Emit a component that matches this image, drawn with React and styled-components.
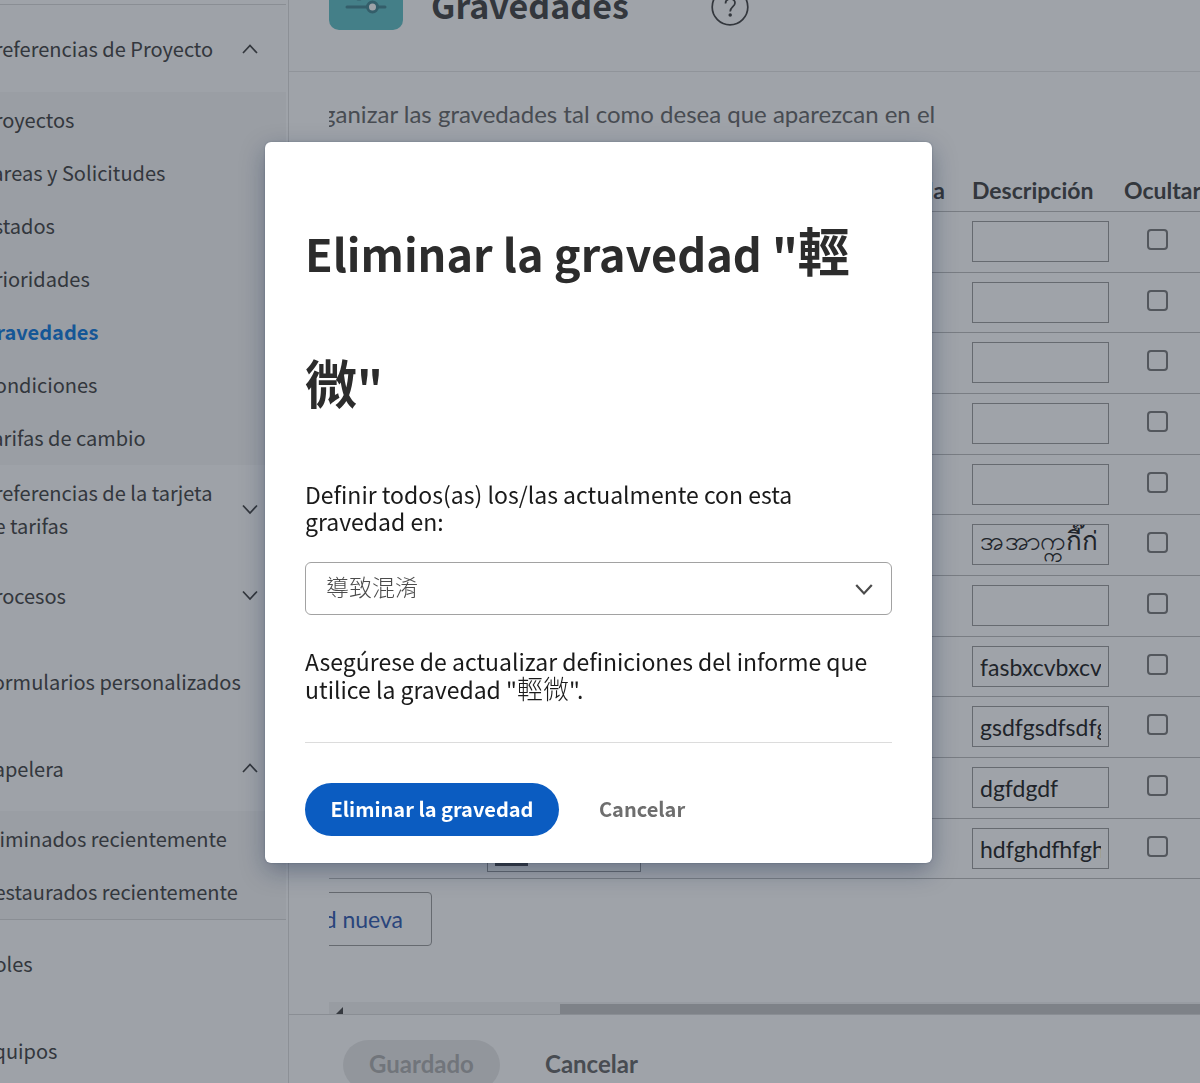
import React from "react";
import styled, { createGlobalStyle } from "styled-components";

const clean = `"Noto Sans CJK TC", "Noto Sans", sans-serif`;
const nova = `Lato, "Noto Sans", "Noto Sans CJK TC", sans-serif`;

const GlobalStyle = createGlobalStyle`
  *, *::before, *::after { box-sizing: border-box; }
  body { margin: 0; background: #fff; font-family: ${nova}; color: #4b4b4b; }
  button, input, select { font: inherit; color: inherit; margin: 0; }
`;

const Page = styled.div`
  display: flex;
  height: 100vh;
  overflow: hidden;
`;

/* Sidebar */
const Sidebar = styled.nav`
  flex: 0 0 289px;
  overflow: hidden;
  padding: 4px 2px 0 0;
  border-right: 1px solid #e0e0e0;
  font-family: ${clean};
  font-size: 20px;
  line-height: 33px;
  color: #4b4b4b;
`;

const GroupButton = styled.button`
  display: flex;
  align-items: center;
  width: 100%;
  height: 87px;
  padding: 0;
  border: 0;
  background: #fdfdfd;
  text-align: left;
  line-height: 33px;
`;

const Group = styled.div`
  border-top: ${(p) => (p.$ruled ? "1px solid #dcdcdc" : "0")};
  &:nth-child(2n + 3) > ${GroupButton} { height: 86px; }
`;

const GroupLabel = styled.span`
  flex: 1;
  margin-left: -18px;
  white-space: pre;
`;

const ArrowBox = styled.span`
  display: flex;
  align-items: center;
  justify-content: center;
  align-self: stretch;
  width: 60px;
  margin-left: -24px;
  padding-right: 12px;
`;

const SubList = styled.ul`
  list-style: none;
  margin: 0;
  padding: 1px 0;
  background: #f7f7f7;
`;

const SubLink = styled.a`
  display: block;
  height: 53px;
  margin-left: -18px;
  line-height: 53px;
  white-space: nowrap;
  text-decoration: none;
  color: ${(p) => (p.$active ? "#1a80e0" : "inherit")};
  font-weight: ${(p) => (p.$active ? 700 : 400)};
`;

/* Main column */
const Main = styled.main`
  flex: 1;
  min-width: 0;
  display: flex;
  flex-direction: column;
`;

const Header = styled.header`
  display: flex;
  align-items: flex-end;
  flex: 0 0 72px;
  padding: 0 40px 41px;
  overflow: hidden;
  border-bottom: 1px solid #e6e6e6;
`;

const Title = styled.h1`
  margin: 0 82px 0 28px;
  padding-bottom: 2px;
  font-family: ${clean};
  font-size: 34px;
  line-height: 46px;
  font-weight: 700;
`;

const HelpButton = styled.button`
  display: flex;
  align-items: center;
  height: 46px;
  padding: 0;
  border: 0;
  background: none;
`;

const Body = styled.section`
  flex: 1;
  min-height: 0;
  margin-left: 40px;
  display: flex;
  flex-direction: column;
  overflow: hidden;
`;

const Intro = styled.p`
  margin: 26px 0 0 -28px;
  font-size: 24px;
  line-height: 32px;
  color: #6e6e6e;
  white-space: nowrap;
`;

const Table = styled.table`
  width: 915px;
  margin-top: 40px;
  table-layout: fixed;
  border-collapse: separate;
  border-spacing: 0;
  font-size: 23px;
`;

const HeadCell = styled.th`
  height: 42px;
  padding: 0 ${(p) => (p.$end ? 27 : 0)}px 0 0;
  border-bottom: 1px solid #c0c0c0;
  text-align: ${(p) => (p.$end ? "right" : "left")};
  line-height: 39px;
  font-weight: 700;
`;

const BodyRow = styled.tr`
  height: 61px;
  &:nth-child(3n + 2) { height: 60px; }
`;

const Cell = styled.td`
  padding: ${(p) => p.$top || 9}px 0 0 ${(p) => p.$left || 0}px;
  border-bottom: 1px solid #c0c0c0;
  vertical-align: top;
`;

const DescriptionInput = styled.input`
  display: block;
  width: 137px;
  height: 41px;
  padding: 0 7px ${(p) => (p.$stacked ? 6 : 0)}px;
  border: 1px solid #a0a0a0;
  border-radius: 0;
  background: #fff;
  color: #2c2c2c;
  font-size: ${(p) => (p.$stacked ? 26 : 23)}px;
`;

const Tick = styled.input`
  appearance: none;
  display: block;
  width: 21px;
  height: 21px;
  border: 2px solid #808080;
  border-radius: 4px;
  background: #fff;
`;

const ColorInput = styled.span`
  display: block;
  width: 154px;
  height: 47px;
  padding: 7px;
  border: 1px solid #a0a0a0;
`;

const Swatch = styled.span`
  display: block;
  width: 33px;
  height: 33px;
  background: #555;
`;

const AddButton = styled.button`
  flex: none;
  width: 334px;
  height: 54px;
  margin: 13px 0 0 -231px;
  padding: 0 28px;
  border: 1px solid #a0a0a0;
  border-radius: 4px;
  background: #fff;
  color: #3b63b5;
  font-size: 23px;
  text-align: right;
  white-space: nowrap;
`;

const ScrollTrack = styled.div`
  display: flex;
  align-items: flex-end;
  justify-content: space-between;
  flex: 0 0 12px;
  margin-top: auto;
  padding-left: 7px;
  background: #f3f3f3;
`;

const ScrollThumb = styled.div`
  width: calc(100% - 224px);
  height: 10px;
  background: #c8c8c8;
`;

const Footer = styled.footer`
  display: flex;
  align-items: flex-start;
  gap: 45px;
  flex: 0 0 69px;
  padding: 25px 54px 0;
  overflow: hidden;
  border-top: 1px solid #dcdcdc;
`;

const FooterButton = styled.button`
  flex: none;
  width: ${(p) => (p.$pill ? "157px" : "auto")};
  height: 50px;
  padding: 0 0 3px;
  border: 0;
  border-radius: 25px;
  background: ${(p) => (p.$pill ? "#eaeaea" : "none")};
  color: ${(p) => (p.$pill ? "#b3b3b3" : "#6e6e6e")};
  font-size: 24px;
  font-weight: 700;
`;

/* Dialog */
const Overlay = styled.div`
  position: fixed;
  inset: 0;
  display: flex;
  align-items: flex-start;
  padding: 142px 268px 24px 265px;
  background: rgba(16, 24, 40, 0.4);
`;

const Dialog = styled.div`
  flex: 1;
  min-width: 0;
  padding: 45px 40px 27px;
  border-radius: 6px;
  background: #fff;
  box-shadow: 0 8px 24px rgba(9, 30, 66, 0.35), 0 0 2px rgba(9, 30, 66, 0.3);
  font-family: ${clean};
  font-size: 23px;
  line-height: 27px;
  color: #1a1a1a;
`;

const DialogTitle = styled.h2`
  margin: 0 0 30px;
  font-size: 45px;
  line-height: 132px;
  font-weight: 700;
  color: #2c2c2c;
`;

const Han = styled.span`
  font-size: ${(p) => (p.$large ? 52 : 26)}px;
  font-weight: ${(p) => (p.$large ? 700 : 300)};
  line-height: 1;
`;

const DialogLabel = styled.label`
  display: block;
`;

const DialogNote = styled.p`
  margin: 0;
`;

const SelectBox = styled.div`
  display: grid;
  align-items: center;
  margin: 27px 0 33px;
  & > * { grid-area: 1 / 1; }
  & > svg { justify-self: end; margin-right: 18px; pointer-events: none; }
`;

const Select = styled.select`
  appearance: none;
  width: 100%;
  height: 53px;
  padding: 0 20px 4px;
  border: 1px solid #a2a2a2;
  border-radius: 6px;
  background: #fff;
  font-weight: 300;
  color: #4b4b4b;
`;

const Actions = styled.div`
  display: flex;
  gap: 40px;
  margin-top: 39px;
  padding-top: 40px;
  border-top: 1px solid #dcdcdc;
`;

const ActionButton = styled.button`
  width: ${(p) => (p.$primary ? "254px" : "auto")};
  height: 53px;
  padding: 0 0 3px;
  border: 0;
  border-radius: 27px;
  background: ${(p) => (p.$primary ? "#0b5cc1" : "none")};
  color: ${(p) => (p.$primary ? "#fff" : "#6e6e6e")};
  font-size: 20px;
  font-weight: 700;
`;

const Chevron = ({ up, size = 18, stroke = 1.7 }) => (
  <svg width={size} height={size} viewBox="0 0 18 18" fill="none" stroke="#4b4b4b" strokeWidth={stroke} aria-hidden="true">
    <path d={up ? "M2 13 9 5.500 16 13" : "M2 5.500 9 13 16 5.500"} />
  </svg>
);

const groups = [
  {
    label: "Preferencias de Proyecto",
    arrow: "up",
    ruled: true,
    items: ["Proyectos", "Tareas y Solicitudes", "Estados", "Prioridades", "Gravedades", "Condiciones", "Tarifas de cambio"],
  },
  { label: "Preferencias de la tarjeta\nde tarifas", arrow: "down" },
  { label: "Procesos", arrow: "down" },
  { label: "Formularios personalizados" },
  { label: "Papelera", arrow: "up", items: ["Eliminados recientemente", "Restaurados recientemente"] },
  { label: "Roles", ruled: true },
  { label: "Equipos" },
];

const descriptions = [
  { text: "" },
  { text: "" },
  { text: "" },
  { text: "" },
  { text: "" },
  { text: "အအာက္ကกี๊ก่", stacked: true },
  { text: "" },
  { text: "fasbxcvbxcvb" },
  { text: "gsdfgsdfsdfg" },
  { text: "dgfdgdf" },
  { text: "hdfghdfhfgh" },
];

export default function App() {
  return (
    <>
      <GlobalStyle />
      <Page>
        <Sidebar>
          {groups.map((g) => (
            <Group key={g.label} $ruled={g.ruled}>
              <GroupButton type="button">
                <GroupLabel>{g.label}</GroupLabel>
                {g.arrow && (
                  <ArrowBox>
                    <Chevron up={g.arrow === "up"} />
                  </ArrowBox>
                )}
              </GroupButton>
              {g.items && (
                <SubList>
                  {g.items.map((item) => (
                    <li key={item}>
                      <SubLink href="#" $active={item === "Gravedades"}>{item}</SubLink>
                    </li>
                  ))}
                </SubList>
              )}
            </Group>
          ))}
        </Sidebar>
        <Main>
          <Header>
            <svg width="74" height="74" viewBox="0 0 74 74" aria-hidden="true">
              <rect width="74" height="74" rx="10" fill="#68c3c8" />
              <g stroke="#4d8c96" strokeWidth="3" strokeLinecap="round">
                <path d="M18 30h38M18 51h38" />
              </g>
              <circle cx="30" cy="38" r="5" fill="#fff" stroke="#4d8c96" strokeWidth="3" />
              <circle cx="43.500" cy="51" r="5" fill="#fff" stroke="#4d8c96" strokeWidth="3" />
            </svg>
            <Title>Gravedades</Title>
            <HelpButton type="button" aria-label="Ayuda">
              <svg width="38" height="38" viewBox="0 0 38 38" fill="none" stroke="#4b4b4b" strokeWidth="1.700">
                <circle cx="19" cy="19" r="17.800" />
                <path d="M14.500 15.500c0-6 9.500-6 9.500-.5 0 3.500-4.800 4-4.800 8.500" />
                <circle cx="19.200" cy="27" r="0.900" fill="#4b4b4b" />
              </svg>
            </HelpButton>
          </Header>
          <Body>
            <Intro>organizar las gravedades tal como desea que aparezcan en el</Intro>
            <Table>
              <colgroup>
                <col width="158" />
                <col width="184" />
                <col width="301" />
                <col width="152" />
                <col width="120" />
              </colgroup>
              <thead>
                <tr>
                  <HeadCell />
                  <HeadCell />
                  <HeadCell $end>Predeterminada</HeadCell>
                  <HeadCell>Descripción</HeadCell>
                  <HeadCell>Ocultar</HeadCell>
                </tr>
              </thead>
              <tbody>
                {descriptions.map(({ text, stacked }, i) => (
                  <BodyRow key={i}>
                    <Cell />
                    <Cell $top={6}>
                      <ColorInput><Swatch /></ColorInput>
                    </Cell>
                    <Cell />
                    <Cell>
                      <DescriptionInput aria-label="Descripción" defaultValue={text} $stacked={stacked} />
                    </Cell>
                    <Cell $top={17} $left={23}>
                      <Tick type="checkbox" aria-label="Ocultar" />
                    </Cell>
                  </BodyRow>
                ))}
              </tbody>
            </Table>
            <AddButton type="button">Agregar gravedad nueva</AddButton>
            <ScrollTrack>
              <svg width="7" height="7" viewBox="0 0 7 7" aria-hidden="true">
                <path d="M0 7 7 0V7Z" fill="#505050" />
              </svg>
              <ScrollThumb />
            </ScrollTrack>
          </Body>
          <Footer>
            <FooterButton type="button" $pill>Guardado</FooterButton>
            <FooterButton type="button">Cancelar</FooterButton>
          </Footer>
        </Main>
      </Page>
      <Overlay>
        <Dialog role="dialog" aria-modal="true" aria-labelledby="dialog-title">
          <DialogTitle id="dialog-title">
            Eliminar la gravedad "<Han $large>輕微</Han>"
          </DialogTitle>
          <DialogLabel htmlFor="replacement">
            Definir todos(as) los/las actualmente con esta gravedad en:
          </DialogLabel>
          <SelectBox>
            <Select id="replacement" defaultValue="導致混淆">
              <option>導致混淆</option>
            </Select>
            <Chevron size={20} stroke={2} />
          </SelectBox>
          <DialogNote>
            Asegúrese de actualizar definiciones del informe que utilice la gravedad "<Han>輕微</Han>".
          </DialogNote>
          <Actions>
            <ActionButton type="button" $primary>Eliminar la gravedad</ActionButton>
            <ActionButton type="button">Cancelar</ActionButton>
          </Actions>
        </Dialog>
      </Overlay>
    </>
  );
}
